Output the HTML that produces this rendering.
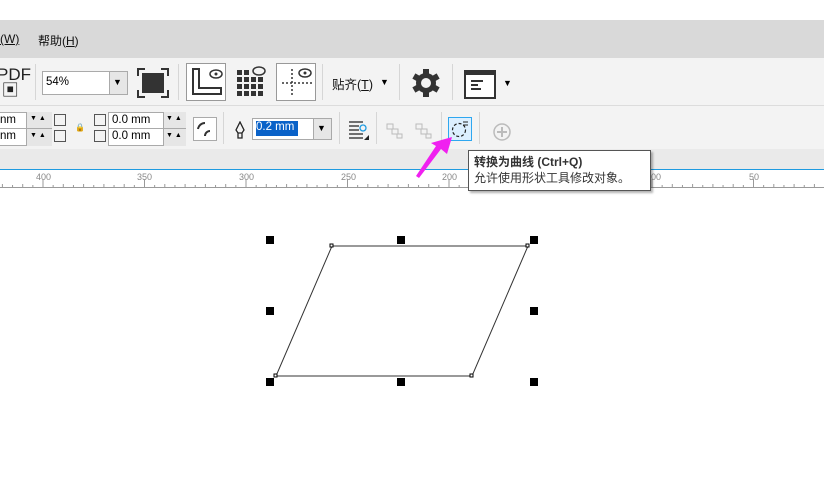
<!DOCTYPE html>
<html><head><meta charset="utf-8"><style>
*{margin:0;padding:0;box-sizing:border-box}
body{width:824px;height:480px;overflow:hidden;background:#fff;font-family:"Liberation Sans","Noto Sans CJK SC",sans-serif;position:relative}
.a{position:absolute}
.menu{top:20px;left:0;width:824px;height:38px;background:#d9d9d9;font-size:12px;color:#111}
.tb{top:58px;left:0;width:824px;height:48px;background:#f3f3f3;border-bottom:1px solid #dcdcdc}
.pb{top:106px;left:0;width:824px;height:43px;background:#f3f3f3}
.band{top:149px;left:0;width:824px;height:20px;background:#eaeaea}
.ruler{top:169px;left:0;width:824px;height:19px;background:#fff;border-top:1px solid #1e9be0;border-bottom:1px solid #9a9a9a}
.sep{width:1px;background:#d6d6d6}
.box{background:#fff;border:1px solid #aaa}
.in{font-size:11.5px;color:#000}
.h{width:8px;height:8px;background:#000}
</style></head><body>
<div class="a menu">
 <span class="a" style="left:0;top:12px"><u>(W)</u></span>
 <span class="a" style="left:38px;top:12px">帮助(<u>H</u>)</span>
</div>
<div class="a tb">
 <span class="a" style="left:-3px;top:9px;font-size:17px;color:#222;line-height:16px">PDF<br>&nbsp;&#9635;</span>
 <div class="a sep" style="left:35px;top:6px;height:36px"></div>
 <div class="a box" style="left:42px;top:13px;width:86px;height:24px"><span class="in a" style="left:3px;top:4px">54%</span><div class="a" style="left:66px;top:0;width:18px;height:22px;background:#e6e6e6;border-left:1px solid #aaa"></div><span class="a" style="left:70px;top:5px;font-size:9px">&#9660;</span></div>
 <svg class="a" style="left:137px;top:10px" width="32" height="30"><path d="M1 8V1h7M24 1h7v7M31 22v7h-7M8 29H1v-7" fill="none" stroke="#333" stroke-width="2"/><rect x="5" y="5" width="22" height="20" fill="#333"/></svg>
 <div class="a sep" style="left:178px;top:6px;height:36px"></div>
 <div class="a box" style="left:186px;top:5px;width:40px;height:38px;border-color:#999"></div>
 <svg class="a" style="left:190px;top:9px" width="34" height="30"><path d="M3 2v25h28v-6H9V2z" fill="none" stroke="#333" stroke-width="2"/><ellipse cx="26" cy="7" rx="6" ry="4" fill="none" stroke="#333" stroke-width="1.5"/><circle cx="26" cy="7" r="1.5" fill="#333"/></svg>
 <svg class="a" style="left:236px;top:8px" width="32" height="32"><g fill="#333"><rect x="1" y="4" width="5" height="5"/><rect x="8" y="4" width="5" height="5"/><rect x="1" y="11" width="5" height="5"/><rect x="8" y="11" width="5" height="5"/><rect x="15" y="11" width="5" height="5"/><rect x="22" y="11" width="5" height="5"/><rect x="1" y="18" width="5" height="5"/><rect x="8" y="18" width="5" height="5"/><rect x="15" y="18" width="5" height="5"/><rect x="22" y="18" width="5" height="5"/><rect x="1" y="25" width="5" height="5"/><rect x="8" y="25" width="5" height="5"/><rect x="15" y="25" width="5" height="5"/><rect x="22" y="25" width="5" height="5"/></g><ellipse cx="23" cy="5" rx="6" ry="4" fill="#f3f3f3" stroke="#333" stroke-width="1.5"/></svg>
 <div class="a box" style="left:276px;top:5px;width:40px;height:38px;border-color:#999"></div>
 <svg class="a" style="left:280px;top:9px" width="34" height="30"><path d="M12 2v26M2 16h30" stroke="#333" stroke-width="1.5" stroke-dasharray="2 2"/><ellipse cx="25" cy="6" rx="6" ry="4" fill="#fff" stroke="#333" stroke-width="1.5"/><circle cx="25" cy="6" r="1.5" fill="#333"/></svg>
 <div class="a sep" style="left:322px;top:6px;height:36px"></div>
 <span class="a" style="left:332px;top:16px;font-size:12.5px;color:#111">贴齐(<u>T</u>)</span><span class="a" style="left:380px;top:19px;font-size:9px">&#9660;</span>
 <div class="a sep" style="left:399px;top:6px;height:36px"></div>
 <svg class="a" style="left:411px;top:10px" width="30" height="30" viewBox="0 0 30 30"><g fill="#333"><circle cx="15" cy="15" r="10"/><g id="t"><rect x="12" y="1" width="6" height="6"/><rect x="12" y="23" width="6" height="6"/></g><use href="#t" transform="rotate(60 15 15)"/><use href="#t" transform="rotate(120 15 15)"/></g><circle cx="15" cy="15" r="5" fill="#f3f3f3"/></svg>
 <div class="a sep" style="left:452px;top:6px;height:36px"></div>
 <svg class="a" style="left:464px;top:12px" width="32" height="30"><rect x="1" y="1" width="30" height="27" fill="#fff" stroke="#333" stroke-width="2"/><rect x="1" y="1" width="30" height="4" fill="#333"/><path d="M7 11h12M7 15h7M7 19h10" stroke="#333" stroke-width="2"/></svg>
 <span class="a" style="left:503px;top:20px;font-size:9px">&#9660;</span>
</div>
<div class="a pb">
 <div class="a box" style="left:-2px;top:6px;width:54px;height:34px"></div>
 <div class="a" style="left:26px;top:6px;width:26px;height:34px;background:#e6e6e6;border-left:1px solid #aaa"></div>
 <div class="a" style="left:-2px;top:22px;width:54px;height:1px;background:#aaa"></div>
 <span class="in a" style="left:0;top:8px">nm</span><span class="in a" style="left:0;top:24px">nm</span>
 <span class="a" style="left:30px;top:9px;font-size:7px">&#9660; &#9650;</span><span class="a" style="left:30px;top:26px;font-size:7px">&#9660; &#9650;</span>
 <div class="a" style="left:54px;top:8px;width:12px;height:12px;border:1px solid #555"></div><div class="a" style="left:54px;top:24px;width:12px;height:12px;border:1px solid #555"></div>
 <span class="a" style="left:75px;top:17px;font-size:8px">&#128274;</span>
 <div class="a" style="left:94px;top:8px;width:12px;height:12px;border:1px solid #555"></div><div class="a" style="left:94px;top:24px;width:12px;height:12px;border:1px solid #555"></div>
 <div class="a box" style="left:108px;top:6px;width:78px;height:34px"></div>
 <div class="a" style="left:163px;top:6px;width:23px;height:34px;background:#e6e6e6;border-left:1px solid #aaa"></div>
 <div class="a" style="left:108px;top:22px;width:78px;height:1px;background:#aaa"></div>
 <span class="in a" style="left:112px;top:8px">0.0 mm</span><span class="in a" style="left:112px;top:24px">0.0 mm</span>
 <span class="a" style="left:166px;top:9px;font-size:7px">&#9660; &#9650;</span><span class="a" style="left:166px;top:26px;font-size:7px">&#9660; &#9650;</span>
 <div class="a box" style="left:193px;top:11px;width:24px;height:24px;border-color:#aaa"></div>
 <svg class="a" style="left:195px;top:13px" width="20" height="20"><path d="M3 10a7 7 0 0 1 7-6M10 17a5 5 0 0 1 5-5" fill="none" stroke="#333" stroke-width="2"/></svg>
 <div class="a sep" style="left:223px;top:6px;height:32px"></div>
 <svg class="a" style="left:234px;top:15px" width="12" height="18"><path d="M6 1L2 9l2 3h4l2-3zM4 12v5h4v-5" fill="none" stroke="#222" stroke-width="1.3"/></svg>
 <div class="a box" style="left:252px;top:12px;width:80px;height:22px"></div>
 <div class="a" style="left:256px;top:15px;width:42px;height:15px;background:#0a62c8"></div>
 <span class="in a" style="left:256px;top:15px;color:#fff">0.2 mm</span>
 <div class="a" style="left:313px;top:13px;width:18px;height:20px;background:#e6e6e6;border-left:1px solid #aaa"></div>
 <span class="a" style="left:317px;top:17px;font-size:9px">&#9660;</span>
 <div class="a sep" style="left:339px;top:6px;height:32px"></div>
 <svg class="a" style="left:348px;top:14px" width="22" height="20"><path d="M1 2h14M1 6h10M1 10h10M1 14h14M1 18h14" stroke="#222" stroke-width="1.2"/><circle cx="15" cy="8" r="3" fill="none" stroke="#1e9be0" stroke-width="1.3"/><path d="M21 15v5h-5z" fill="#222"/></svg>
 <div class="a sep" style="left:376px;top:6px;height:32px"></div>
 <svg class="a" style="left:386px;top:17px" width="18" height="16"><path d="M1 1h6v5h5v5h4v4h-5v-4H6V6H1z" fill="none" stroke="#bbb"/></svg>
 <svg class="a" style="left:415px;top:17px" width="18" height="16"><path d="M1 1h6v5h5v5h4v4h-5v-4H6V6H1z" fill="none" stroke="#bbb"/></svg>
 <div class="a sep" style="left:441px;top:6px;height:32px"></div>
 <div class="a" style="left:448px;top:11px;width:24px;height:24px;background:#dcefff;border:1px solid #2ea7f0"></div>
 <svg class="a" style="left:450px;top:13px" width="20" height="20"><circle cx="9" cy="11" r="6.5" fill="none" stroke="#222" stroke-width="1.2" stroke-dasharray="3 2"/><path d="M13 3h5M13 6h5" stroke="#222"/></svg>
 <div class="a sep" style="left:479px;top:6px;height:32px"></div>
 <svg class="a" style="left:492px;top:16px" width="20" height="20"><circle cx="10" cy="10" r="8" fill="none" stroke="#bbb" stroke-width="1.5"/><path d="M10 5v10M5 10h10" stroke="#bbb" stroke-width="2"/></svg>
</div>
<div class="a band"></div>
<div class="a ruler">
 <svg width="824" height="18" style="position:absolute;top:0;left:0">
  <g font-size="9" fill="#888" font-family="Liberation Sans">
   <text x="36" y="10">400</text><text x="137" y="10">350</text><text x="239" y="10">300</text><text x="341" y="10">250</text><text x="442" y="10">200</text><text x="646" y="10">100</text><text x="749" y="10">50</text>
  </g>
  <g stroke="#999" id="tk"></g>
 </svg>
</div>
<script>
var g=document.getElementById('tk'),s='';
for(var v=450;v>=0;v-=5){var x=43+(400-v)*2.03;var h=(v%50==0)?8:(v%10==0?3:2);s+='<line x1="'+x+'" x2="'+x+'" y1="'+(17-h)+'" y2="17"/>';}
g.innerHTML=s;
</script>
<svg class="a" style="left:0;top:0" width="824" height="480">
 <polygon points="332,246 528,246 472,376 276,376" fill="none" stroke="#333" stroke-width="1"/>
 <g fill="#fff" stroke="#000"><rect x="330" y="244" width="3" height="3"/><rect x="526" y="244" width="3" height="3"/><rect x="470" y="374" width="3" height="3"/><rect x="274" y="374" width="3" height="3"/></g>
 <polygon points="452,137 447,154 441,149 419,178 416,176 436,146 431,143" fill="#f020f0"/>
</svg>
<div class="a h" style="left:266px;top:236px"></div><div class="a h" style="left:397px;top:236px"></div><div class="a h" style="left:530px;top:236px"></div>
<div class="a h" style="left:266px;top:307px"></div><div class="a h" style="left:530px;top:307px"></div>
<div class="a h" style="left:266px;top:378px"></div><div class="a h" style="left:397px;top:378px"></div><div class="a h" style="left:530px;top:378px"></div>
<div class="a" style="left:468px;top:150px;width:183px;height:41px;background:#fff;border:1px solid #555;box-shadow:2px 2px 2px rgba(0,0,0,.3);font-size:12px;color:#333;line-height:16px;padding:3px 0 0 5px">
 <b>转换为曲线 (Ctrl+Q)</b><br>允许使用形状工具修改对象。
</div>
</body></html>
